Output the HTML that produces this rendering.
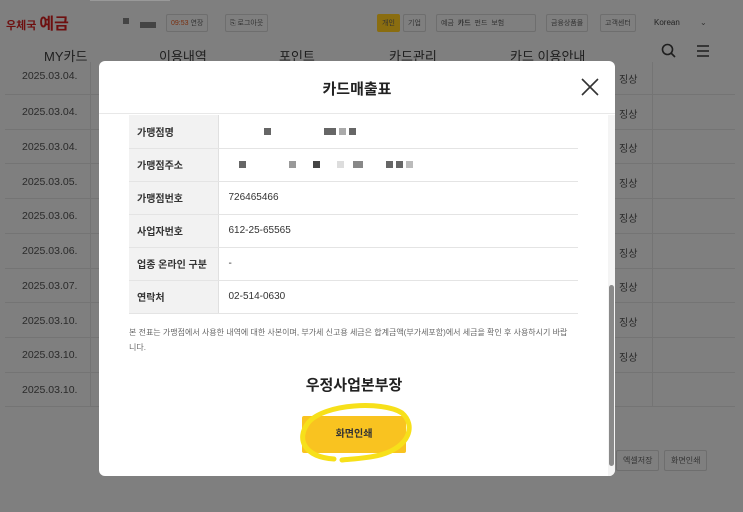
<!DOCTYPE html>
<html style="background:#7f7f7f"><head><meta charset="utf-8"><style>
*{margin:0;padding:0;box-sizing:border-box}
html,body{background:#7f7f7f;background-color:rgb(127,127,127)}
body{width:743px;height:512px;overflow:hidden;font-family:"Liberation Sans","Noto Sans CJK KR",sans-serif;position:relative;color:#222}
.bg{position:absolute;left:0;top:0;width:743px;height:512px;background:rgb(127,127,127);box-shadow:inset 0 0 0 400px rgb(127,127,127)}
.a{position:absolute;white-space:nowrap}
.date{position:absolute;left:22px;font-size:10.5px;color:#2a2a2a}
.hl{position:absolute;left:5px;width:730px;height:1px;background:#747474}
.nav{font-size:13px;color:#1e1e1e}
.sm{font-size:7px;color:#333;border:1px solid #6e6e6e;padding:3px 4px;border-radius:2px}
.modal{position:absolute;left:99px;top:61px;width:516px;height:415px;background:#fff;border-radius:6px;overflow:hidden}
table{border-collapse:collapse;position:absolute;left:30px;top:54px;width:449px}
td{height:33px;border-bottom:1px solid #e4e4e4;font-size:10px}
td.l{width:89px;background:#f2f2f2;font-weight:bold;padding-left:8px;color:#333;border-right:1px solid #e0e0e0}
td.v{padding-left:10px;color:#333}
.px{display:inline-block;width:7px;height:7px;background:#666;margin-right:3px;vertical-align:middle}
</style></head><body>
<svg class="a" style="left:0;top:0" width="743" height="512"><rect x="0" y="0" width="743" height="512" fill="#7f7f7f"/></svg>
<div class="bg"></div>
<!-- header -->
<div class="a" style="left:6px;top:10px;font-size:11px;font-weight:bold;color:#6e1010">우체국 <span style="font-size:16px">예금</span></div>
<div class="a" style="left:90px;top:0;width:80px;height:1px;background:#999"></div>
<div class="a" style="left:123px;top:18px;width:6px;height:6px;background:#444"></div>
<div class="a" style="left:140px;top:22px;width:16px;height:6px;background:#444"></div>
<div class="a sm" style="left:166px;top:14px"><span style="color:#7a3010">09:53</span> 연장</div>
<div class="a sm" style="left:225px;top:14px">⎘ 로그아웃</div>
<div class="a sm" style="left:377px;top:14px;background:#8a6d10;border-color:#8a6d10;color:#333">개인</div>
<div class="a sm" style="left:403px;top:14px">기업</div>
<div class="a sm" style="left:436px;top:14px;width:100px">예금 &nbsp;<b>카드</b> &nbsp;펀드 &nbsp;보험</div>
<div class="a sm" style="left:546px;top:14px">금융상품몰</div>
<div class="a sm" style="left:600px;top:14px">고객센터</div>
<div class="a" style="left:654px;top:18px;font-size:8px;color:#222">Korean</div>
<div class="a" style="left:700px;top:18px;font-size:8px;color:#333">⌄</div>
<div class="a nav" style="left:44px;top:46px">MY카드</div>
<div class="a nav" style="left:159px;top:46px">이용내역</div>
<div class="a nav" style="left:279px;top:46px">포인트</div>
<div class="a nav" style="left:389px;top:46px">카드관리</div>
<div class="a nav" style="left:510px;top:46px">카드 이용안내</div>
<svg class="a" style="left:661px;top:43px" width="16" height="16"><circle cx="6.5" cy="6.5" r="5" fill="none" stroke="#1e1e1e" stroke-width="1.6"/><line x1="10" y1="10" x2="14" y2="14" stroke="#1e1e1e" stroke-width="1.6"/></svg>
<svg class="a" style="left:696px;top:44px" width="14" height="14"><path d="M1 2H13M1 7H13M1 12H13" stroke="#1e1e1e" stroke-width="1.5"/></svg>
<!-- rows -->
<div class="a" style="left:90px;top:62px;width:1px;height:344px;background:#747474"></div>
<div class="date" style="top:70px">2025.03.04.</div>
<div class="hl" style="top:94px"></div><div class="date" style="top:106px">2025.03.04.</div>
<div class="hl" style="top:129px"></div><div class="date" style="top:141px">2025.03.04.</div>
<div class="hl" style="top:163px"></div><div class="date" style="top:176px">2025.03.05.</div>
<div class="hl" style="top:198px"></div><div class="date" style="top:210px">2025.03.06.</div>
<div class="hl" style="top:233px"></div><div class="date" style="top:245px">2025.03.06.</div>
<div class="hl" style="top:268px"></div><div class="date" style="top:280px">2025.03.07.</div>
<div class="hl" style="top:302px"></div><div class="date" style="top:315px">2025.03.10.</div>
<div class="hl" style="top:337px"></div><div class="date" style="top:349px">2025.03.10.</div>
<div class="hl" style="top:372px"></div><div class="date" style="top:384px">2025.03.10.</div>
<div class="hl" style="top:406px"></div>
<div class="a" style="left:652px;top:62px;width:1px;height:344px;background:#747474"></div>
<div class="a" style="left:619px;top:64px;font-size:10px;line-height:34.7px;color:#2a2a2a;white-space:normal;width:20px">징상<br>징상<br>징상<br>징상<br>징상<br>징상<br>징상<br>징상<br>징상</div>
<div class="a sm" style="left:616px;top:450px;font-size:8px;padding:4px 6px">엑셀저장</div>
<div class="a sm" style="left:664px;top:450px;font-size:8px;padding:4px 6px">화면인쇄</div>
<!-- modal -->
<div class="modal">
<div class="a" style="left:0;width:516px;top:17px;text-align:center;font-size:15px;font-weight:bold;color:#222">카드매출표</div>
<svg class="a" style="left:482px;top:17px" width="18" height="18"><path d="M1 1L17 17M17 1L1 17" stroke="#333" stroke-width="1.6"/></svg>
<div class="a" style="left:0;top:52px;width:516px;height:1px;background:#e8e8e8"></div>
<table>
<tr><td class="l">가맹점명</td><td class="v"><span style="margin-left:35px" class="px"></span><span class="px" style="margin-left:50px;width:12px"></span><span class="px" style="background:#aaa"></span><span class="px"></span></td></tr>
<tr><td class="l">가맹점주소</td><td class="v"><span style="margin-left:10px" class="px"></span><span class="px" style="margin-left:40px;background:#999"></span><span class="px" style="margin-left:14px;background:#444"></span><span class="px" style="margin-left:14px;background:#ddd"></span><span class="px" style="margin-left:6px;background:#888;width:10px"></span><span class="px" style="margin-left:20px"></span><span class="px"></span><span class="px" style="background:#bbb"></span></td></tr>
<tr><td class="l">가맹점번호</td><td class="v">726465466</td></tr>
<tr><td class="l">사업자번호</td><td class="v">612-25-65565</td></tr>
<tr><td class="l">업종 온라인 구분</td><td class="v">-</td></tr>
<tr><td class="l">연락처</td><td class="v">02-514-0630</td></tr>
</table>
<div class="a" style="left:30px;top:264px;font-size:8px;line-height:15px;color:#666;white-space:normal;width:440px">본 전표는 가맹점에서 사용한 내역에 대한 사본이며, 부가세 신고용 세금은 합계금액(부가세포함)에서 세금을 확인 후 사용하시기 바랍니다.</div>
<div class="a" style="left:0;width:510px;top:313px;text-align:center;font-size:15px;font-weight:bold;color:#222">우정사업본부장</div>
<div class="a" style="left:203px;top:355px;width:104px;height:37px;background:#f9c320;border-radius:2px;text-align:center;line-height:37px;font-size:10px;font-weight:bold;color:#333">화면인쇄</div>
<svg class="a" style="left:195px;top:338px" width="125" height="70"><path d="M40 60C10 58 2 40 14 24C30 4 90 2 108 14C122 26 116 48 86 56C70 60 55 60 48 61" fill="none" stroke="#f7e01a" stroke-width="5" stroke-linecap="round"/></svg>
<div class="a" style="left:509px;top:54px;width:7px;height:361px;background:#f4f4f4"></div>
<div class="a" style="left:510px;top:224px;width:5px;height:181px;background:#8a8a8a;border-radius:3px"></div>
</div>
</body></html>
